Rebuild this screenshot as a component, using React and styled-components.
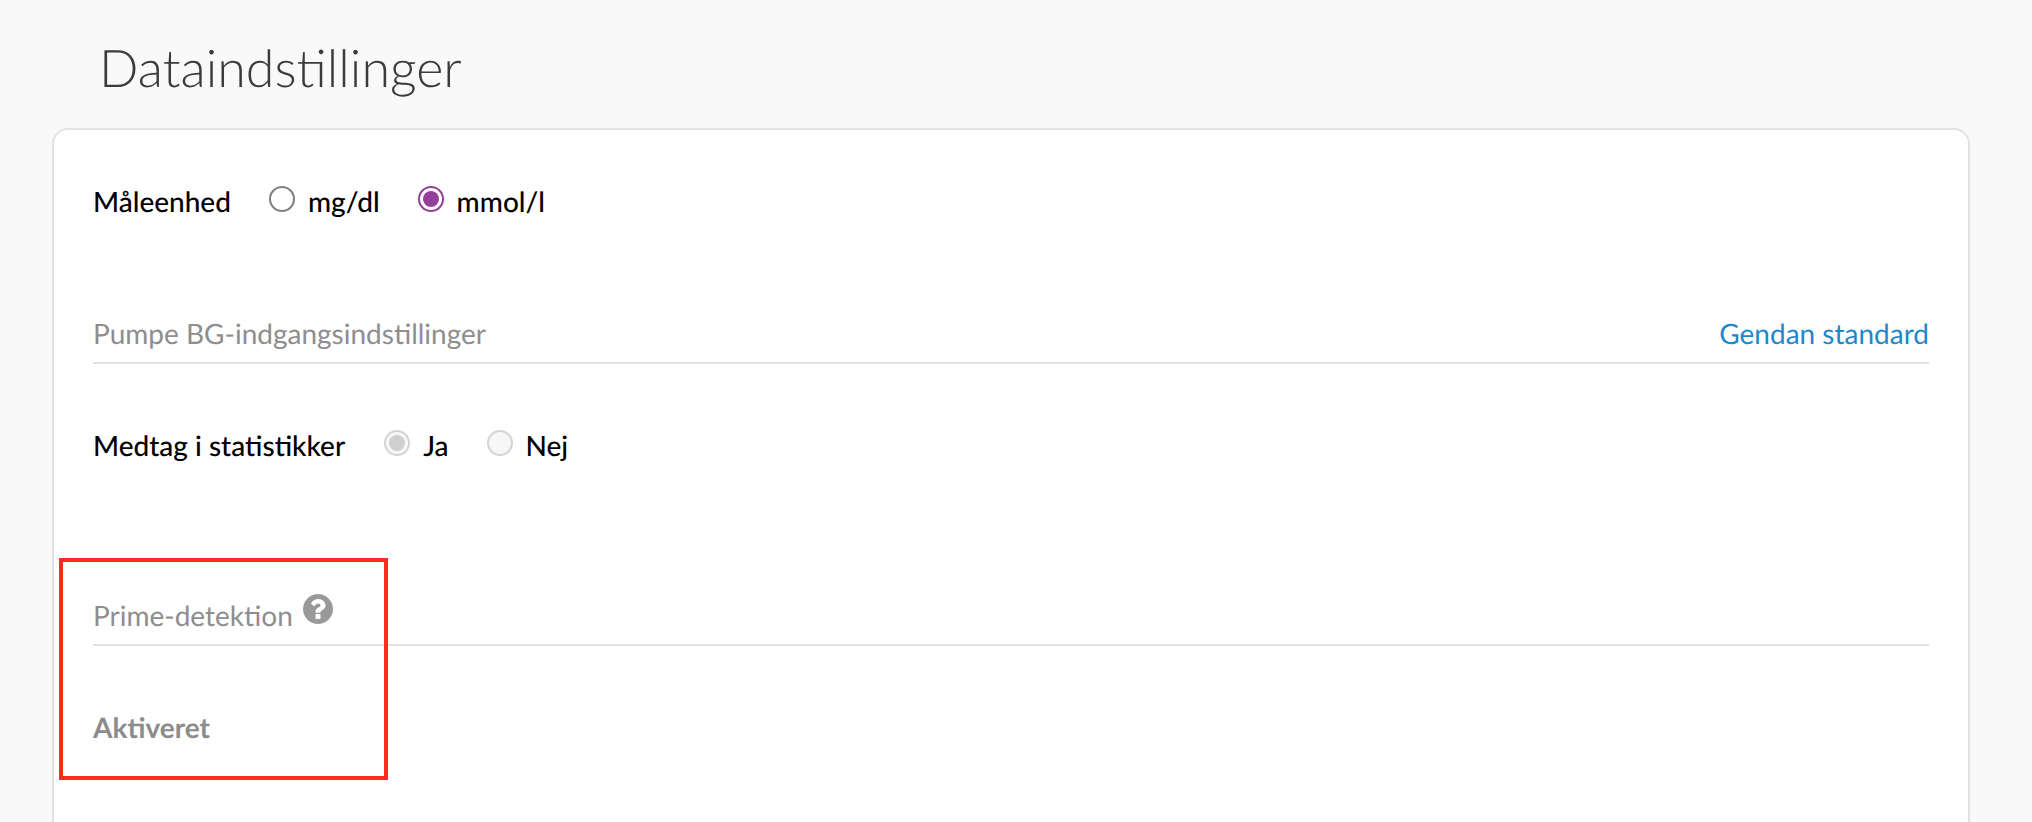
import styled, { createGlobalStyle } from 'styled-components'

const GlobalStyle = createGlobalStyle`
    html, body {
        margin: 0;
        height: 100%;
        overflow: hidden;
        background: #F9F9F9;
    }
    body {
        font-family: "Lato", "Liberation Sans", sans-serif;
        text-rendering: geometricPrecision;
    }
`

const Page = styled.div`
    position: relative;
    height: 822px;
    padding: 0 62px 0 52px;
    overflow: hidden;
`

const Title = styled.h1`
    margin: 0;
    padding: 36px 0 0 47px;
    height: 128px;
    box-sizing: border-box;
    font-size: 52px;
    line-height: 64px;
    font-weight: 300;
    color: #3B3B3B;
`

const Card = styled.div`
    box-sizing: border-box;
    height: 800px;
    padding: 0 39px;
    background: #fff;
    border: 2px solid #E2E2E2;
    border-radius: 16px;
`

const RadioRow = styled.div`
    display: flex;
    align-items: center;
    height: 34px;
    margin-top: ${p => p.$top}px;
    font-size: 28px;
    font-weight: 500;
    color: #000;
`

const RowLabel = styled.span`
    margin-right: ${p => p.$gap}px;
`

const Option = styled.span`
    display: flex;
    align-items: center;
    gap: 13px;
    margin-right: 38px;
`

const Radio = styled.span`
    position: relative;
    top: -2px;
    box-sizing: border-box;
    width: 26px;
    height: 26px;
    border-radius: 50%;
    border: 2px solid ${p => p.$disabled ? '#D4D4D4' : p.$checked ? '#94409A' : '#7F7F7F'};
    background: ${p => p.$disabled ? '#F7F7F7' : '#fff'};

    &::after {
        content: "";
        display: ${p => p.$checked ? 'block' : 'none'};
        margin: 3px;
        height: 16px;
        border-radius: 50%;
        background: ${p => p.$disabled ? '#CFCFCF' : '#94409A'};
    }
`

const SectionHeader = styled.div`
    display: flex;
    justify-content: space-between;
    margin-top: ${p => p.$top}px;
    padding-bottom: 12px;
    border-bottom: 2px solid #E2E2E2;
    font-size: 28px;
    line-height: 34px;
    color: #8E8E8E;
`

const SectionTitle = styled.span`
    display: flex;
    align-items: flex-start;
    gap: 10px;
`

const HelpSvg = styled.svg`
    width: 30px;
    height: 30px;
    margin-top: -4px;
    fill: #999;
`

const ResetLink = styled.a`
    color: #1F88C9;
    text-decoration: none;
`

const StatusText = styled.div`
    margin-top: 64px;
    font-size: 28px;
    line-height: 34px;
    font-weight: 700;
    color: #8C8C8C;
`

const Highlight = styled.div`
    position: absolute;
    left: 59px;
    top: 558px;
    width: 329px;
    height: 222px;
    box-sizing: border-box;
    border: 4px solid #FF2A20;
    pointer-events: none;
`

function HelpIcon() {
    return (
        <HelpSvg viewBox="128 128 1536 1536">
            <path d="M1024 1376v-192q0-14-9-23t-23-9h-192q-14 0-23 9t-9 23v192q0 14 9 23t23 9h192q14 0 23-9t9-23zm256-672q0-88-55.5-163t-138.5-116-170-41q-243 0-371 213-15 24 8 42l132 100q7 6 19 6 16 0 25-12 53-68 86-92 34-24 86-24 48 0 85.5 26t37.5 59q0 38-20 61t-68 45q-63 28-115.5 86.5t-52.5 125.5v36q0 14 9 23t23 9h192q14 0 23-9t9-23q0-19 21.5-49.5t54.5-49.5q32-18 49-28.5t46-35 44.5-48 28-60.5 12.5-81zm384 192q0 209-103 385.5t-279.5 279.5-385.5 103-385.5-103-279.5-279.5-103-385.5 103-385.5 279.5-279.5 385.5-103 385.5 103 279.5 279.5 103 385.5z" />
        </HelpSvg>
    );
}

function App() {
    return (
        <Page>
            <GlobalStyle />
            <Title>Dataindstillinger</Title>
            <Card>
                <RadioRow $top={54}>
                    <RowLabel $gap={38}>Måleenhed</RowLabel>
                    <Option><Radio />mg/dl</Option>
                    <Option><Radio $checked />mmol/l</Option>
                </RadioRow>
                <SectionHeader $top={98}>
                    <SectionTitle>Pumpe BG-indgangsindstillinger</SectionTitle>
                    <ResetLink href="#">Gendan standard</ResetLink>
                </SectionHeader>
                <RadioRow $top={64}>
                    <RowLabel $gap={39}>Medtag i statistikker</RowLabel>
                    <Option><Radio $checked $disabled />Ja</Option>
                    <Option><Radio $disabled />Nej</Option>
                </RadioRow>
                <SectionHeader $top={136}>
                    <SectionTitle>Prime-detektion<HelpIcon /></SectionTitle>
                </SectionHeader>
                <StatusText>Aktiveret</StatusText>
            </Card>
            <Highlight />
        </Page>
    );
}

export default App;
